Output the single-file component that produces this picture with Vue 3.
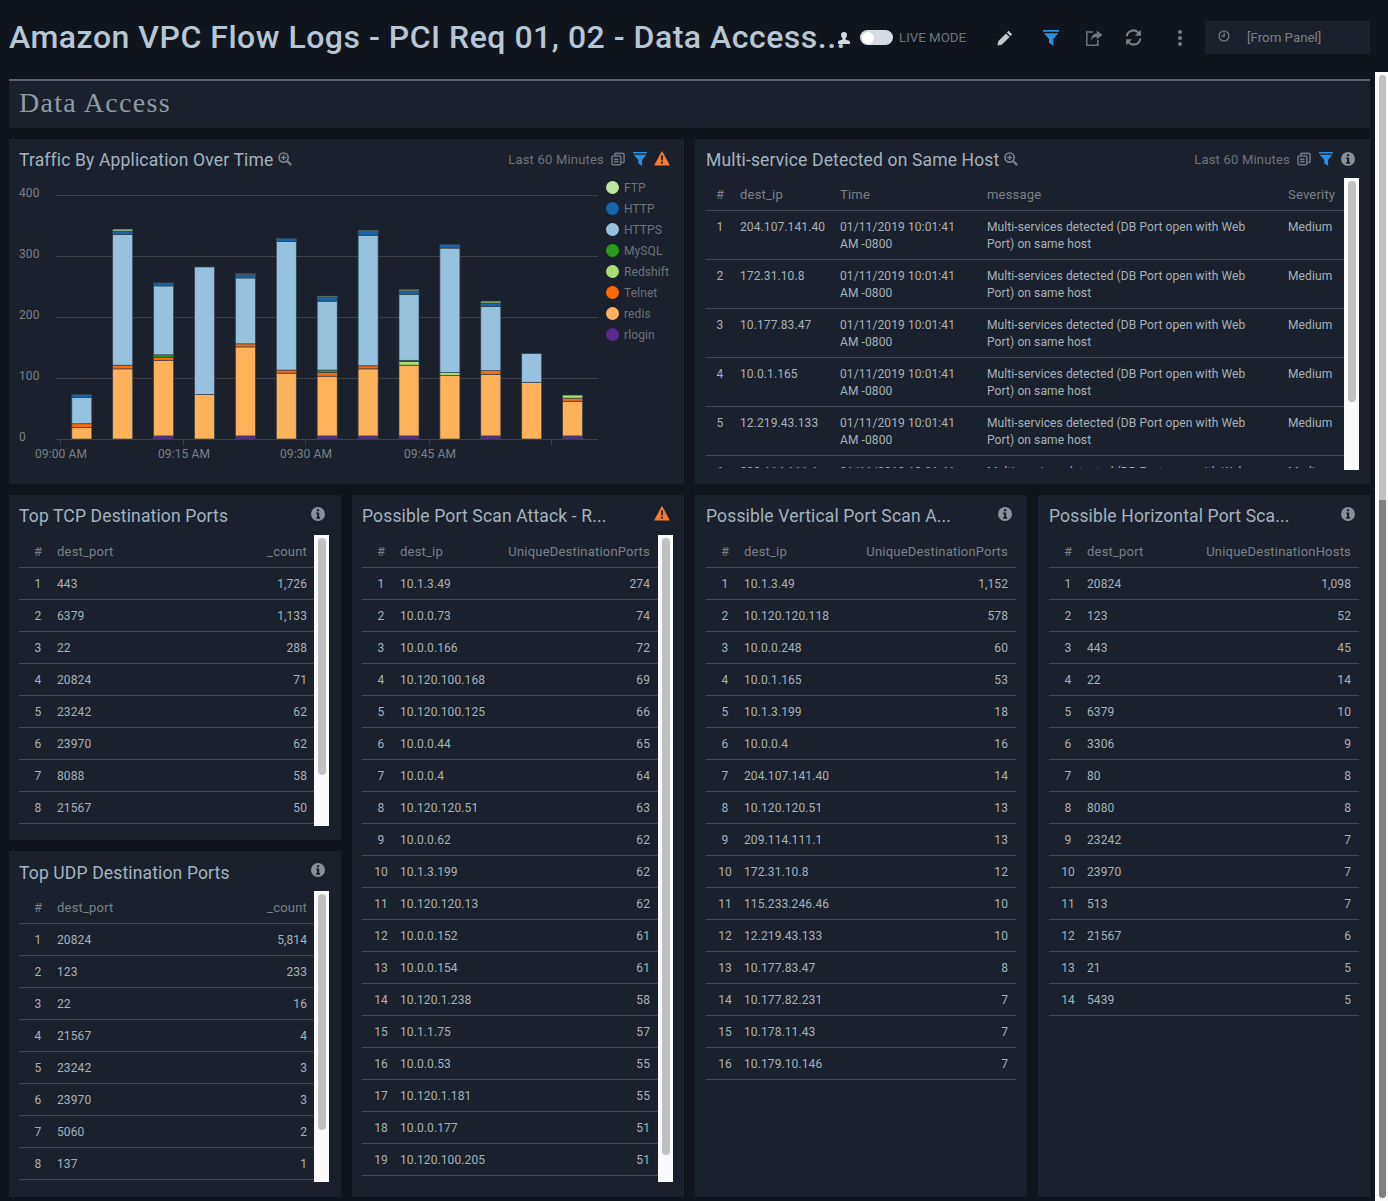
<script setup>
const legend = [
  { name: 'FTP', color: '#bde5a0' },
  { name: 'HTTP', color: '#1665ab' },
  { name: 'HTTPS', color: '#96c2de' },
  { name: 'MySQL', color: '#2a9a1c' },
  { name: 'Redshift', color: '#a8dc75' },
  { name: 'Telnet', color: '#ff6a05' },
  { name: 'redis', color: '#ffb25a' },
  { name: 'rlogin', color: '#5a2a90' }
]
const colors = Object.fromEntries(legend.map(l => [l.name, l.color]))

// bottom-up stacks, values read off the chart
const series = [
  { redis: 19, Telnet: 6, HTTPS: 43, HTTP: 5 },
  { redis: 115, Telnet: 6, HTTPS: 214, HTTP: 6, FTP: 3 },
  { rlogin: 5, redis: 124, Telnet: 5, MySQL: 4, HTTPS: 113, HTTP: 5 },
  { redis: 73, HTTPS: 209 },
  { rlogin: 5, redis: 146, Telnet: 5, HTTPS: 108, HTTP: 6, FTP: 1 },
  { redis: 108, Telnet: 5, HTTPS: 211, HTTP: 5 },
  { rlogin: 5, redis: 98, Telnet: 6, MySQL: 4, HTTPS: 113, HTTP: 6, Redshift: 2 },
  { rlogin: 5, redis: 110, Telnet: 5, HTTPS: 214, HTTP: 6, Redshift: 2 },
  { rlogin: 5, redis: 116, Redshift: 6, MySQL: 2, HTTPS: 108, HTTP: 6, FTP: 2 },
  { redis: 104, Redshift: 5, HTTPS: 204, HTTP: 6 },
  { rlogin: 5, redis: 101, Telnet: 6, HTTPS: 105, HTTP: 6, Redshift: 3 },
  { redis: 93, HTTPS: 47 },
  { rlogin: 5, redis: 57, Telnet: 5, Redshift: 5 }
]

const CHART_TOP = 178
const yOf = v => 439 - CHART_TOP - v * 0.61

const bars = series.flatMap((stack, i) => {
  const x = 62.8 + i * 40.9
  let total = 0
  return Object.entries(stack).map(([name, v]) => {
    total += v
    return { key: i + name, x, y: yOf(total), h: v * 0.61, fill: colors[name] }
  })
})
const yTicks = [0, 100, 200, 300, 400]
const xTicks = [
  { x: 51, label: '09:00 AM' },
  { x: 174, label: '09:15 AM' },
  { x: 296, label: '09:30 AM' },
  { x: 420, label: '09:45 AM' },
  { x: 542, label: '' }
]

const services = ['204.107.141.40', '172.31.10.8', '10.177.83.47', '10.0.1.165', '12.219.43.133', '209.114.111.1']

const toRows = str => str.split(' ').map(p => p.split(':'))

const tcp = { title: 'Top TCP Destination Ports', key: 'dest_port', val: '_count', thumb: 237, height: 291, pad: 'pad-a',
  rows: toRows('443:1,726 6379:1,133 22:288 20824:71 23242:62 23970:62 8088:58 21567:50') }
const udp = { title: 'Top UDP Destination Ports', key: 'dest_port', val: '_count', thumb: 236, height: 291, pad: 'pad-a',
  rows: toRows('20824:5,814 123:233 22:16 21567:4 23242:3 23970:3 5060:2 137:1') }

const tall = [
  { title: 'Possible Port Scan Attack - R...', icon: 'warn', key: 'dest_ip', val: 'UniqueDestinationPorts', thumb: 617, height: 647, pad: 'pad-b',
    rows: toRows('10.1.3.49:274 10.0.0.73:74 10.0.0.166:72 10.120.100.168:69 10.120.100.125:66 10.0.0.44:65 10.0.0.4:64 10.120.120.51:63 10.0.0.62:62 10.1.3.199:62 10.120.120.13:62 10.0.0.152:61 10.0.0.154:61 10.120.1.238:58 10.1.1.75:57 10.0.0.53:55 10.120.1.181:55 10.0.0.177:51 10.120.100.205:51') },
  { title: 'Possible Vertical Port Scan A...', icon: 'info', key: 'dest_ip', val: 'UniqueDestinationPorts', pad: 'pad-c',
    rows: toRows('10.1.3.49:1,152 10.120.120.118:578 10.0.0.248:60 10.0.1.165:53 10.1.3.199:18 10.0.0.4:16 204.107.141.40:14 10.120.120.51:13 209.114.111.1:13 172.31.10.8:12 115.233.246.46:10 12.219.43.133:10 10.177.83.47:8 10.177.82.231:7 10.178.11.43:7 10.179.10.146:7') },
  { title: 'Possible Horizontal Port Sca...', icon: 'info', key: 'dest_port', val: 'UniqueDestinationHosts', pad: 'pad-c',
    rows: toRows('20824:1,098 123:52 443:45 22:14 6379:10 3306:9 80:8 8080:8 23242:7 23970:7 513:7 21567:6 21:5 5439:5') }
]
</script>

<template>
  <svg class="sprite" xmlns="http://www.w3.org/2000/svg">
    <symbol id="i-funnel" viewBox="0 0 16 16">
      <path fill="currentColor" d="M0 0h16v1.8H0zM.8 3.2h14.4L10.4 9v7L6 12.8V9z" />
    </symbol>
    <symbol id="i-warn" viewBox="0 0 16 15">
      <path fill="currentColor" stroke="currentColor" stroke-width="1.2" stroke-linejoin="round" d="M8 1l7 13H1z" />
      <path fill="#1b212c" d="M7 4.6h2l-.2 5H7.2zM7 10.7h2v1.9H7z" />
    </symbol>
    <symbol id="i-info" viewBox="0 0 14 14">
      <circle fill="currentColor" cx="7" cy="7" r="7" />
      <path fill="#1b212c" d="M5.9 2.3h2.3v2H5.9zM5.1 5.4h3.1v4.7h.9v1.6H5.1v-1.6h.9V7H5.1z" />
    </symbol>
    <symbol id="i-docs" viewBox="0 0 15 14">
      <g fill="none" stroke="currentColor" stroke-width="1.7">
        <rect x="1" y="3.8" width="9.5" height="9.4" rx="1.4" />
        <path d="M4 3.6V2.2q0-1.2 1.2-1.2h7.6q1.2 0 1.2 1.2v7.4q0 1.2-1.2 1.2h-2" />
        <path d="M3.2 7.2h5M3.2 9.8h5" />
      </g>
    </symbol>
    <symbol id="i-zoom" viewBox="0 0 15 15">
      <g fill="none" stroke="currentColor">
        <circle cx="6" cy="6" r="4.9" stroke-width="1.8" />
        <path stroke-width="1.6" d="M3.4 6h5.2M6 3.4v5.2" />
        <path stroke-width="2.4" d="M9.8 9.8l4.3 4.3" />
      </g>
    </symbol>
    <symbol id="i-pencil" viewBox="0 0 16 16">
      <path fill="currentColor" d="M11.6.8l3.6 3.6-1.7 1.7-3.6-3.6zM9 3.4l3.6 3.6-7.8 7.8L.4 15.6l.8-4.4z" />
    </symbol>
    <symbol id="i-share" viewBox="0 0 18 16">
      <g fill="none" stroke="currentColor" stroke-width="1.5">
        <path d="M8 2H1.8v13.2h11V10" />
      </g>
      <path fill="currentColor" d="M11.8.5L17.6 5l-5.8 4.5V7c-3 0-4.8 1-5.6 4.4C5.8 6.400 8.300 3.500 11.800 3.200z" />
    </symbol>
    <symbol id="i-refresh" viewBox="0 0 16 16">
      <g fill="none" stroke="currentColor" stroke-width="1.9">
        <path d="M1.600 7A6.400 6.400 0 0 1 13 3.800" />
        <path d="M14.400 9A6.400 6.400 0 0 1 3 12.200" />
      </g>
      <path fill="currentColor" d="M15 .6V6.400H9.200zM1 15.400V9.600h5.800z" />
    </symbol>
    <symbol id="i-person" viewBox="0 0 12 12">
      <path fill="currentColor" d="M6 0a2.900 2.900 0 0 1 2.900 3c0 1.500-.7 2.800-1.500 3.400v1.200c1.800.6 4.600 1 4.600 2.400v2H0v-2c0-1.400 2.800-1.800 4.600-2.400V6.400C3.800 5.800 3.100 4.500 3.100 3A2.900 2.900 0 0 1 6 0z" />
    </symbol>
    <symbol id="i-clock" viewBox="0 0 12 12">
      <g fill="none" stroke="currentColor" stroke-width="1.200">
        <circle cx="6" cy="6" r="5" />
        <path d="M6.200 2.800v3.400H3.400" />
      </g>
    </symbol>
  </svg>

  <div class="page">
    <header class="topbar">
      <h1 class="dash-title">Amazon VPC Flow Logs - PCI Req 01, 02 - Data Access...</h1>
      <svg class="ic person"><use href="#i-person" /></svg>
      <span class="toggle"><span class="knob"></span></span>
      <span class="live">LIVE MODE</span>
      <svg class="ic pencil"><use href="#i-pencil" /></svg>
      <svg class="ic funnel top-funnel"><use href="#i-funnel" /></svg>
      <svg class="ic share"><use href="#i-share" /></svg>
      <svg class="ic refresh"><use href="#i-refresh" /></svg>
      <span class="kebab"><i></i><i></i><i></i></span>
      <div class="timebox">
        <svg class="ic clock"><use href="#i-clock" /></svg>
        <span>[From Panel]</span>
      </div>
    </header>

    <div class="section-bar">Data Access</div>

    <main class="grid">
      <section class="panel wide chart-panel">
        <div class="panel-head pad-a">
          <span class="panel-title">Traffic By Application Over Time</span>
          <svg class="ic small zoom"><use href="#i-zoom" /></svg>
          <span class="range">Last 60 Minutes</span>
          <svg class="ic small docs"><use href="#i-docs" /></svg>
          <svg class="ic small funnel gap-funnel"><use href="#i-funnel" /></svg>
          <svg class="ic warn"><use href="#i-warn" /></svg>
        </div>
        <div class="chart-body">
          <svg class="chart" width="597" height="290">
            <g v-for="t in yTicks" :key="t">
              <line x1="47" x2="589" :y1="yOf(t) + 0.500" :y2="yOf(t) + 0.500" class="grid-line" />
              <text x="10" :y="yOf(t) + 2" class="axis">{{ t }}</text>
            </g>
            <rect v-for="b in bars" :key="b.key" :x="b.x" :y="b.y" width="20" :height="b.h" :fill="b.fill" class="seg" />
            <g v-for="t in xTicks" :key="t.x">
              <line :x1="t.x + 0.500" :x2="t.x + 0.500" y1="261" y2="267" class="grid-line" />
              <text :x="t.x + 1" y="280" class="axis" text-anchor="middle">{{ t.label }}</text>
            </g>
          </svg>
          <ul class="legend">
            <li v-for="l in legend" :key="l.name">
              <span class="dot" :style="{ background: l.color }"></span>{{ l.name }}
            </li>
          </ul>
        </div>
      </section>

      <section class="panel wide">
        <div class="panel-head pad-c">
          <span class="panel-title">Multi-service Detected on Same Host</span>
          <svg class="ic small zoom"><use href="#i-zoom" /></svg>
          <span class="range">Last 60 Minutes</span>
          <svg class="ic small docs"><use href="#i-docs" /></svg>
          <svg class="ic small funnel gap-funnel"><use href="#i-funnel" /></svg>
          <svg class="ic info info-wide"><use href="#i-info" /></svg>
        </div>
        <div class="table-wrap pad-c multi-wrap">
          <div class="table-clip">
            <table class="multi">
              <colgroup>
                <col style="width: 28px" /><col style="width: 106px" /><col style="width: 147px" /><col style="width: 301px" /><col />
              </colgroup>
              <thead>
                <tr><th class="num">#</th><th class="ind">dest_ip</th><th>Time</th><th>message</th><th>Severity</th></tr>
              </thead>
              <tbody>
                <tr v-for="(ip, i) in services" :key="ip">
                  <td class="num">{{ i + 1 }}</td>
                  <td class="ind">{{ ip }}</td>
                  <td>01/11/2019 10:01:41 AM -0800</td>
                  <td>Multi-services detected (DB Port open with Web Port) on same host</td>
                  <td>Medium</td>
                </tr>
              </tbody>
            </table>
          </div>
          <div class="scroll"><div class="thumb" style="height: 221px"></div></div>
        </div>
      </section>

      <div class="stack">
        <section v-for="p in [tcp, udp]" :key="p.title" class="panel grow">
          <div class="panel-head" :class="p.pad">
            <span class="panel-title">{{ p.title }}</span>
            <svg class="ic info push"><use href="#i-info" /></svg>
          </div>
          <div class="table-wrap" :class="p.pad" :style="{ height: p.height + 'px' }">
            <div class="table-clip">
              <table class="ports">
                <thead><tr><th class="num">#</th><th>{{ p.key }}</th><th class="val">{{ p.val }}</th></tr></thead>
                <tbody>
                  <tr v-for="(r, i) in p.rows" :key="r[0]">
                    <td class="num">{{ i + 1 }}</td><td>{{ r[0] }}</td><td class="val">{{ r[1] }}</td>
                  </tr>
                </tbody>
              </table>
            </div>
            <div class="scroll"><div class="thumb" :style="{ height: p.thumb + 'px' }"></div></div>
          </div>
        </section>
      </div>

      <section v-for="p in tall" :key="p.title" class="panel">
        <div class="panel-head" :class="p.pad">
          <span class="panel-title">{{ p.title }}</span>
          <svg v-if="p.icon === 'warn'" class="ic warn push"><use href="#i-warn" /></svg>
          <svg v-else class="ic info push"><use href="#i-info" /></svg>
        </div>
        <div class="table-wrap" :class="p.pad" :style="p.height ? { height: p.height + 'px' } : null">
          <div class="table-clip">
            <table class="ports">
              <thead><tr><th class="num">#</th><th>{{ p.key }}</th><th class="val">{{ p.val }}</th></tr></thead>
              <tbody>
                <tr v-for="(r, i) in p.rows" :key="r[0]">
                  <td class="num">{{ i + 1 }}</td><td>{{ r[0] }}</td><td class="val">{{ r[1] }}</td>
                </tr>
              </tbody>
            </table>
          </div>
          <div v-if="p.thumb" class="scroll"><div class="thumb" :style="{ height: p.thumb + 'px' }"></div></div>
        </div>
      </section>
    </main>

    <div class="page-scroll"><div class="page-thumb"></div></div>
  </div>
</template>

<style scoped>
.sprite {
  display: none;
}

.page {
  position: relative;
  width: 1388px;
  height: 1201px;
  padding: 0 18px 0 9px;
  box-sizing: border-box;
  overflow: hidden;
  background: #10141c;
  font-family: Roboto, "Liberation Sans", sans-serif;
}

.topbar {
  display: flex;
  align-items: center;
  height: 75px;
  margin-bottom: 4px;
}

.dash-title {
  flex: none;
  width: 831px;
  margin: -2px 0 0;
  white-space: nowrap;
  font-size: 32px;
  font-weight: 500;
  letter-spacing: 0.5px;
  color: #b7c6d2;
}

.ic {
  flex: none;
  display: block;
}

.person {
  width: 12px;
  height: 12px;
  margin-left: -2px;
  color: #d5dbe3;
}

.toggle {
  flex: none;
  width: 33px;
  height: 15px;
  margin-left: 10px;
  border-radius: 8px;
  background: #d5dbe3;
  position: relative;
}

.knob {
  position: absolute;
  left: 2px;
  top: 1.500px;
  width: 12px;
  height: 12px;
  border-radius: 50%;
  background: #fff;
}

.live {
  flex: none;
  width: 68px;
  margin-left: 6px;
  font-size: 13.300px;
  white-space: nowrap;
  color: #6d737b;
}

.pencil {
  width: 16px;
  height: 16px;
  margin-left: 30px;
  color: #c3c8ce;
}

.top-funnel {
  width: 16px;
  height: 16px;
  margin-left: 30px;
}

.funnel {
  color: #2a8fe0;
}

.share {
  width: 18px;
  height: 16px;
  margin-left: 26px;
  color: #6f757d;
}

.refresh {
  width: 17px;
  height: 17px;
  margin-left: 22px;
  color: #7b8087;
}

.kebab {
  flex: none;
  display: flex;
  flex-direction: column;
  gap: 2px;
  margin-left: 36px;
}

.kebab i {
  display: block;
  width: 4px;
  height: 4px;
  border-radius: 50%;
  background: #7b8087;
}

.timebox {
  flex: none;
  display: flex;
  align-items: center;
  width: 165px;
  height: 33px;
  margin-left: 23px;
  padding-left: 13px;
  box-sizing: border-box;
  background: #1b212c;
  font-size: 13.300px;
  color: #7b8087;
}

.clock {
  width: 12px;
  height: 12px;
  margin-right: 17px;
  margin-top: -3px;
  color: #7b8087;
}

.section-bar {
  height: 47px;
  line-height: 44px;
  padding-left: 10px;
  border-top: 2px solid #5c6270;
  background: #1b212c;
  font-family: "Liberation Serif", serif;
  font-size: 28px;
  letter-spacing: 1.300px;
  color: #8f9ba6;
}

.grid {
  display: grid;
  grid-template-columns: repeat(4, 332px);
  grid-template-rows: 345px 702px;
  column-gap: 11px;
  row-gap: 11px;
  margin-top: 11px;
}

.panel {
  background: #1b212c;
  min-width: 0;
}

.wide {
  grid-column: span 2;
}

.stack {
  display: flex;
  flex-direction: column;
  gap: 11px;
}

.grow {
  flex: 1;
}

.grow:first-child {
  flex: none;
  height: 345px;
}

.grow:last-child .panel-title {
  margin-top: 4px;
}

.pad-a {
  padding-left: 10px;
  padding-right: 12px;
}

.pad-b {
  padding-left: 10px;
  padding-right: 11px;
}

.pad-c {
  padding-left: 11px;
  padding-right: 11px;
}

.panel-head {
  display: flex;
  align-items: center;
  height: 40px;
  box-sizing: border-box;
}

.panel-title {
  margin-top: 2px;
  font-size: 17.500px;
  letter-spacing: 0.150px;
  color: #a5b3bf;
  white-space: nowrap;
}

.range {
  margin-left: auto;
  font-size: 13px;
  letter-spacing: 0.200px;
  color: #6d737b;
}

.small {
  width: 14px;
  height: 14px;
}

.zoom {
  margin-left: 5px;
  color: #7b8087;
}

.docs {
  margin-left: 7px;
  color: #6d737b;
}

.gap-funnel {
  margin-left: 8px;
}

.warn {
  width: 16px;
  height: 15px;
  margin-top: -1px;
  margin-left: 7px;
  margin-right: 2px;
  color: #f47b36;
}

.info {
  width: 14px;
  height: 14px;
  margin-top: -3px;
  color: #8a9097;
}

.info-wide {
  margin-top: -1px;
  margin-left: 8px;
  margin-right: 4px;
}

.push {
  margin-left: auto;
  margin-right: 4px;
}

.warn.push {
  margin-top: -3px;
  margin-right: 3px;
}

.chart-body {
  display: flex;
  height: 300px;
  margin-top: -1px;
}

.chart {
  flex: none;
  display: block;
}

.grid-line {
  stroke: #3e4148;
  stroke-width: 1;
}

.seg {
  stroke: #36414e;
  stroke-width: 0.700;
}

.axis {
  font-size: 12px;
  letter-spacing: 0.100px;
  fill: #7b8087;
  font-family: Roboto, "Liberation Sans", sans-serif;
}

.legend {
  list-style: none;
  margin: -1px 0 0;
  padding: 0;
}

.legend li {
  display: flex;
  align-items: center;
  height: 21px;
  font-size: 12px;
  letter-spacing: 0.100px;
  color: #6d737b;
}

.dot {
  width: 13px;
  height: 13px;
  margin-right: 5px;
  border-radius: 50%;
}

.table-wrap {
  display: flex;
  align-items: flex-start;
}

.multi-wrap {
  height: 292px;
  margin-top: -1px;
}

.table-clip {
  flex: 1;
  min-width: 0;
  height: 100%;
  overflow: hidden;
}

.multi-wrap .table-clip {
  height: 290px;
}

table {
  width: 100%;
  border-spacing: 0;
  table-layout: fixed;
  font-size: 12px;
  letter-spacing: 0.100px;
}

th {
  height: 33px;
  padding: 0;
  box-sizing: border-box;
  border-bottom: 1px solid #444a55;
  text-align: left;
  font-weight: 400;
  font-size: 13px;
  letter-spacing: 0.200px;
  color: #7b8087;
}

td {
  height: 32px;
  padding: 0;
  box-sizing: border-box;
  border-bottom: 1px solid #444a55;
  color: #a8b1b9;
}

.num {
  width: 38px;
  text-align: center;
}

.val {
  width: 180px;
  padding-right: 7px;
  text-align: right;
}

.pad-b .val,
.pad-c .val {
  padding-right: 8px;
}

.multi .num {
  width: auto;
}

.multi td {
  height: 49px;
  padding: 8px 20px 6px 0;
  line-height: 17px;
  vertical-align: top;
}

.multi td.num {
  padding-right: 0;
}

.multi .ind {
  padding-left: 6px;
}

.scroll {
  flex: none;
  width: 15px;
  height: 100%;
  padding: 3px 3px 0 4px;
  box-sizing: border-box;
  background: #fafafa;
}

.thumb {
  width: 8px;
  border-radius: 4px;
  background: #c1c1c1;
}

.page-scroll {
  position: absolute;
  top: 72px;
  left: 1375px;
  width: 13px;
  height: 1129px;
  padding: 3px 2px 0 4px;
  box-sizing: border-box;
  background: #fafafa;
}

.page-thumb {
  height: 1123px;
  border-radius: 4px;
  background: linear-gradient(#c1c1c1 425px, #808080 425px);
}
</style>

<style>
html, body {
  margin: 0;
  background: #10141c;
  overflow: hidden;
}
</style>
